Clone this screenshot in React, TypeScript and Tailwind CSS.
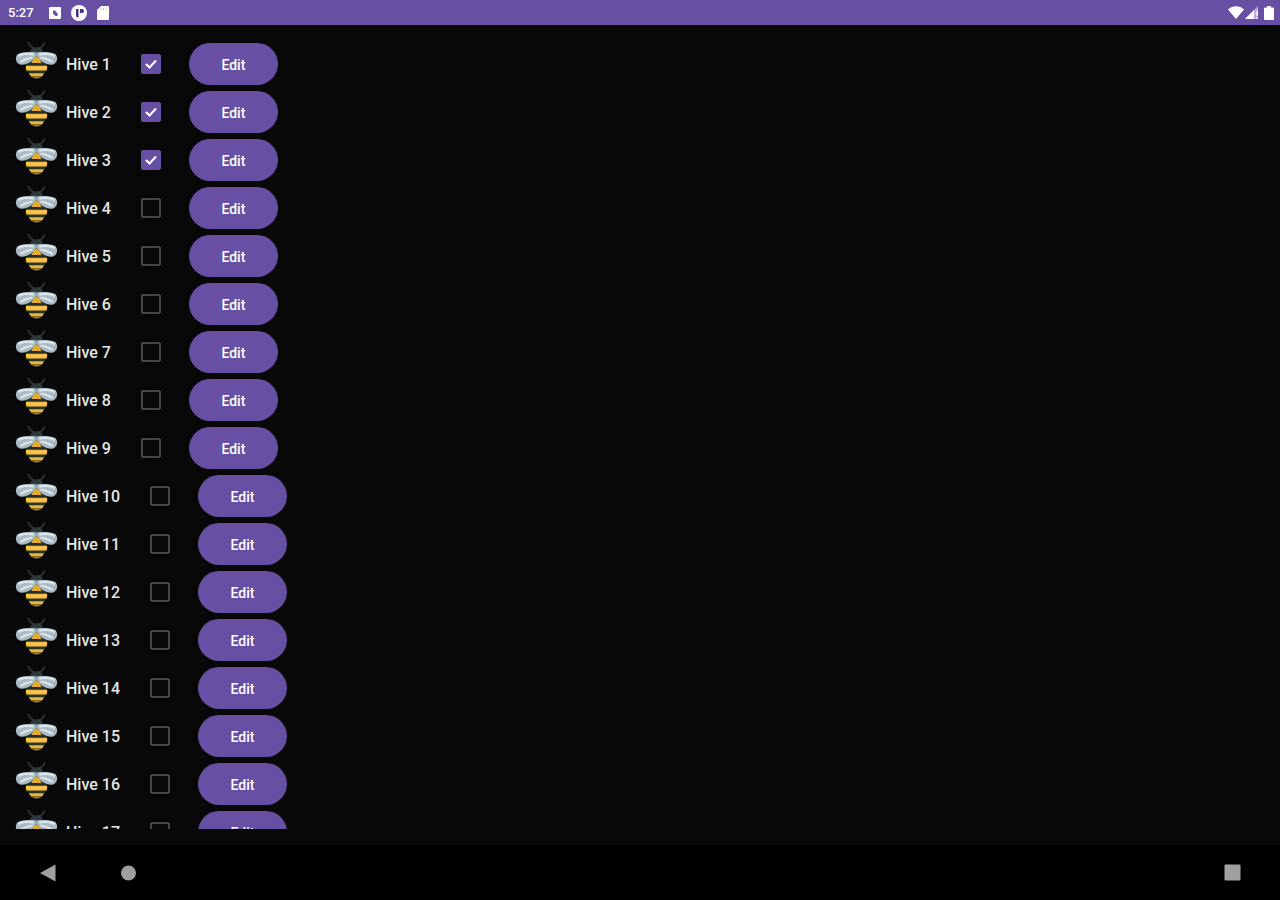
import { useState } from "react";

const HIVE_COUNT = 17;

function BeeIcon() {
  return (
    <svg viewBox="0 0 44 40" className="h-10 w-11 shrink-0 self-start" aria-hidden="true">
      <path
        d="M13.500 2.500q.5 3.500 5 5.500M29.500 2.500q-.5 3.500-5 5.500"
        fill="none"
        stroke="#2f383f"
        strokeWidth="1.700"
        strokeLinecap="round"
      />
      <path d="M15 12c0-6.500 13-6.500 13 0v1H15z" fill="#2f383f" />
      <path d="M15 12h13l3 14H12z" fill="#252b30" />
      <path
        d="M21.500 12.500C15 11.500 7 12 3 14c-3.500 2.500-2.500 9 2 10.500 5.500 1 12-2 16.500-8.500z"
        fill="#a9bac4"
      />
      <path
        d="M21.500 12.500c6.500-1 14.500-.5 18.500 1.500 3.500 2.500 2.500 9-2 10.500-5.500 1-12-2-16.500-8.500z"
        fill="#a9bac4"
      />
      <path
        d="M19 14.500c-6-1.200-12-.8-16 1.500M24 14.500c6-1.200 12-.8 16 1.500M17.500 17.500c-4.500.5-9 2.500-12 4.500M25.500 17.500c4.500.5 9 2.500 12 4.500"
        fill="none"
        stroke="#dce5ea"
        strokeWidth="2.200"
      />
      <path d="M21.500 16.500c2.500 2 4.500 4 5 6.500h-10c.5-2.500 2.500-4.500 5-6.500z" fill="#e8ad2e" />
      <path d="M12 23.500h19l1 2.500H11z" fill="#252b30" />
      <path d="M11 25.700h21q.8 2.500-.5 5h-20q-1.300-2.500-.5-5z" fill="#f6c344" />
      <path d="M12 30.700h19l-2 3.300H14z" fill="#2b3035" />
      <path d="M14 33.200h15q-.7 2-2 3.300H16q-1.300-1.300-2-3.300z" fill="#e9b340" />
      <path d="M16 36.500h11q-2.500 1.700-5.500 2.300-3-.6-5.500-2.300z" fill="#96783a" />
    </svg>
  );
}

function StatusBar() {
  return (
    <header className="flex h-[25px] shrink-0 items-center justify-between bg-[#6750a4] pr-1.5 pl-2 text-white">
      <div className="flex items-center">
        <span className="w-[41px] text-[13px] leading-4 font-medium">5:27</span>
        <svg viewBox="0 0 12 12" className="size-3" aria-hidden="true">
          <rect width="12" height="12" rx="1" fill="#fff" />
          <path d="M4 3.500h2l2.500 3v2.500h-2L4 6.500z" fill="#6750a4" />
        </svg>
        <svg viewBox="0 0 16 16" className="ml-2.5 size-4" aria-hidden="true">
          <circle cx="8" cy="8" r="8" fill="#fff" />
          <path d="M5 4h2.500v8.500H6L5 11zM9 4h2a2 2 0 0 1 0 4H9z" fill="#4b2f91" />
        </svg>
        <svg viewBox="0 0 12 14" className="ml-2.5 h-3.5 w-3" aria-hidden="true">
          <path d="M4 0h7a1 1 0 0 1 1 1v12a1 1 0 0 1-1 1H1a1 1 0 0 1-1-1V4z" fill="#fff" />
          <path d="M4 2v2.500M6.500 2v2.500M9 2v2.500" stroke="#cfc5e8" />
        </svg>
      </div>
      <div className="flex items-center">
        <svg viewBox="0 0 16 13" className="h-[13px] w-4" aria-hidden="true">
          <path d="M8 13 0 3.500C4.500-.8 11.500-.8 16 3.500z" fill="#fff" />
        </svg>
        <svg viewBox="0 0 13 13" className="ml-px size-[13px]" aria-hidden="true">
          <path d="M13 0v13H0z" fill="#b9acdb" />
          <path d="M9 4v9H0zM11.500 5H13v5h-1.500zM11.500 11.500H13V13h-1.500z" fill="#fff" />
        </svg>
        <svg viewBox="0 0 10 14" className="ml-1.5 h-3.5 w-2.5" aria-hidden="true">
          <path d="M3 0h4v1.500h2a1 1 0 0 1 1 1V13a1 1 0 0 1-1 1H1a1 1 0 0 1-1-1V2.500a1 1 0 0 1 1-1h2z" fill="#fff" />
        </svg>
      </div>
    </header>
  );
}

type HiveRowProps = {
  number: number;
  active: boolean;
  onToggle: () => void;
};

function HiveRow({ number, active, onToggle }: HiveRowProps) {
  const id = `hive-${number}`;

  return (
    <li className="flex h-12 items-center">
      <BeeIcon />
      <label htmlFor={id} className="ml-[7px] pt-0.5 text-base font-medium whitespace-nowrap text-[#e6e6e6]">
        Hive {number}
      </label>
      <span className="ml-[30px] grid size-5 shrink-0 place-items-center">
        <input
          id={id}
          type="checkbox"
          checked={active}
          onChange={onToggle}
          className="peer col-start-1 row-start-1 size-5 appearance-none rounded-xs border-2 border-[#47464a] checked:border-[#6750a4] checked:bg-[#6750a4]"
        />
        <svg
          viewBox="0 0 20 20"
          className="pointer-events-none invisible col-start-1 row-start-1 size-5 peer-checked:visible"
          aria-hidden="true"
        >
          <path d="m5 10 3.500 3.500L15 6.500" fill="none" stroke="#fff" strokeWidth="2.200" />
        </svg>
      </span>
      <button
        type="button"
        aria-label={`Edit hive ${number}`}
        className="ml-7 h-[42px] min-w-[89px] rounded-full bg-[#6750a4] px-8 pt-0.5 text-sm font-medium text-white"
      >
        Edit
      </button>
    </li>
  );
}

function NavigationBar() {
  return (
    <nav className="flex h-[55px] shrink-0 items-center bg-black px-[38px] text-[#a0a0a0]">
      <button type="button" aria-label="Back">
        <svg viewBox="0 0 20 20" className="size-5" fill="currentColor" aria-hidden="true">
          <path d="M17.500 1.500v17L2 10z" />
        </svg>
      </button>
      <button type="button" aria-label="Home" className="ml-[60px]">
        <svg viewBox="0 0 20 20" className="size-5" fill="currentColor" aria-hidden="true">
          <circle cx="10.500" cy="10" r="7.500" />
        </svg>
      </button>
      <button type="button" aria-label="Recent apps" className="ml-auto">
        <svg viewBox="0 0 20 20" className="size-5" fill="currentColor" aria-hidden="true">
          <rect x="2.500" y="1.500" width="16" height="16" rx="1" />
        </svg>
      </button>
    </nav>
  );
}

export default function App() {
  const [activeHives, setActiveHives] = useState<number[]>([1, 2, 3]);

  function toggleHive(number: number) {
    setActiveHives((current) =>
      current.includes(number) ? current.filter((n) => n !== number) : [...current, number]
    );
  }

  return (
    <div className="flex h-screen flex-col bg-[#080808] font-['Roboto',sans-serif]">
      <StatusBar />
      <main className="flex min-h-0 flex-1 flex-col px-[15px] pt-[15px] pb-4">
        <ul className="min-h-0 flex-1 overflow-hidden">
          {Array.from({ length: HIVE_COUNT }, (_, i) => i + 1).map((number) => (
            <HiveRow
              key={number}
              number={number}
              active={activeHives.includes(number)}
              onToggle={() => toggleHive(number)}
            />
          ))}
        </ul>
      </main>
      <NavigationBar />
    </div>
  );
}
